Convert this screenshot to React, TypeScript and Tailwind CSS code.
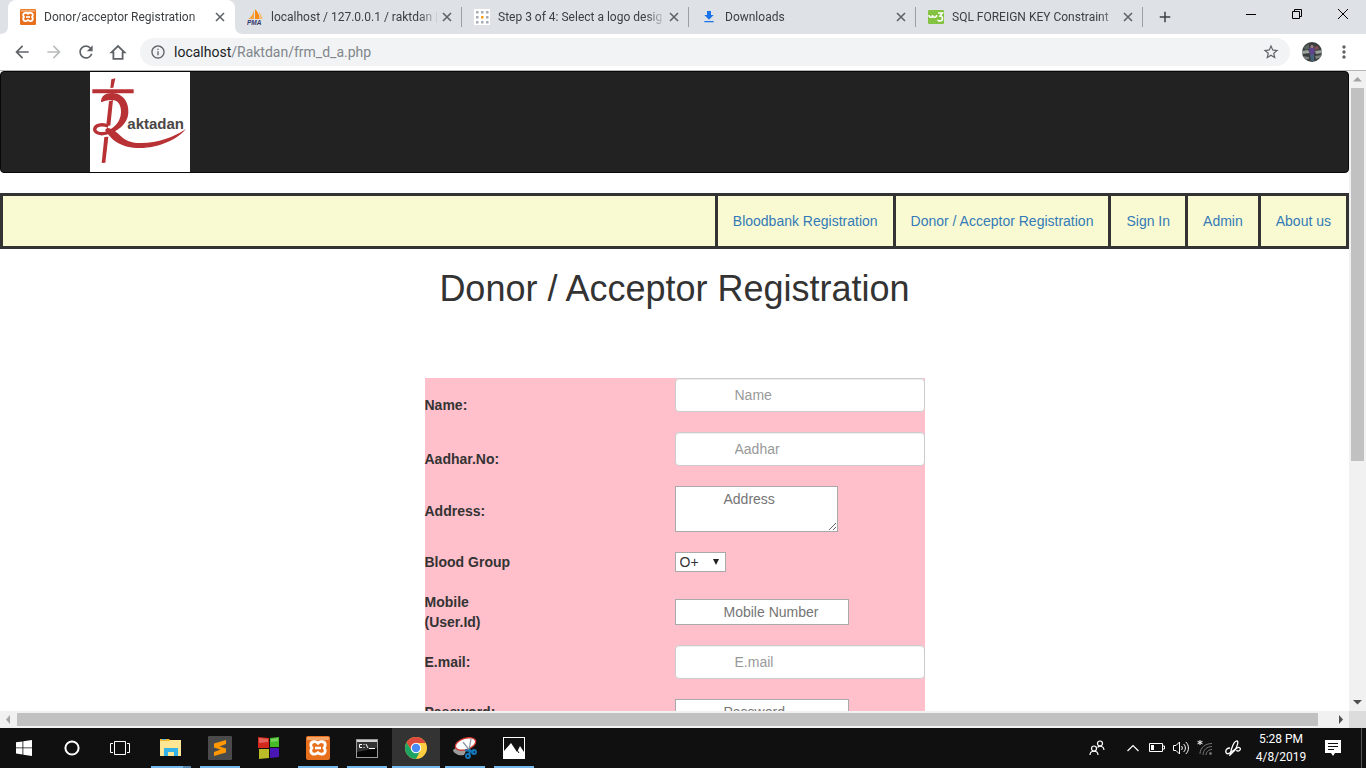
import React from "react";
import {
  MdAdd,
  MdArrowBack,
  MdArrowForward,
  MdFileDownload,
  MdInfoOutline,
  MdMoreVert,
  MdRefresh,
  MdStarBorder,
} from "react-icons/md";

function XamppIcon({ className }: { className: string }) {
  return (
    <svg viewBox="0 0 24 24" className={className} aria-hidden="true">
      <rect width="24" height="24" rx="2" fill="#e8701c" />
      <rect x="1" y="1" width="22" height="3" rx="1" fill="#f5a76a" />
      <path
        d="M12 7.3C10 4.6 4.6 5.300 4.800 9c0 1.300.500 2.300 1.300 3-1 .8-1.500 2-1.300 3.200.5 3.500 5.200 3.800 7.200 1.300 2 2.500 6.700 2.200 7.200-1.300.2-1.200-.3-2.400-1.300-3.200.8-.7 1.300-1.700 1.300-3 .2-3.700-5.200-4.400-7.200-1.700Z"
        fill="none"
        stroke="#fff"
        strokeWidth="2.800"
        strokeLinejoin="round"
      />
      <path d="M9 12h6" stroke="#fff" strokeWidth="2.500" />
    </svg>
  );
}

function PmaIcon() {
  return (
    <svg viewBox="0 0 16 16" className="size-4" aria-hidden="true">
      <path d="M7 1v9H1.500C4.500 8 6 5 7 1Z" fill="#f9a13a" />
      <path d="M8 0c3 3 4.500 6 4.500 10H8Z" fill="#f58a14" />
      <path d="M12 3c2 2 3 4 3.500 7H13Z" fill="#fbbf73" />
      <text x="0" y="15.500" fontSize="6.500" fontWeight="700" fontStyle="italic" fontFamily="Liberation Sans, sans-serif" fill="#33386b">
        PMA
      </text>
    </svg>
  );
}

function DotsIcon() {
  const points = [3, 8, 13];
  return (
    <svg viewBox="0 0 16 16" className="size-4" aria-hidden="true">
      <rect width="16" height="16" fill="#fff" />
      {points.map((y) =>
        points.map((x) => (
          <rect key={`${x}-${y}`} x={x - 1} y={y - 1} width="2.500" height="2.500" rx="0.500" fill={x === 8 && y === 8 ? "#f59b0b" : "#a2aab2"} />
        ))
      )}
    </svg>
  );
}

function W3Icon() {
  return (
    <svg viewBox="0 0 16 16" className="size-4" aria-hidden="true">
      <rect y="1" width="16" height="14" rx="1" fill="#84c341" />
      <path d="M1 6c0 3 3.500 3 3.500 0 0 3 4 3 4.200 0M10 4h4.500L12 7c3.500 0 3.500 5-.5 5-1 0-1.500-.5-2-1" fill="none" stroke="#fff" strokeWidth="1.500" />
    </svg>
  );
}

const tabs = [
  { title: "Donor/acceptor Registration", icon: <XamppIcon className="size-4" />, active: true },
  { title: "localhost / 127.0.0.1 / raktdan |", icon: <PmaIcon /> },
  { title: "Step 3 of 4: Select a logo desig", icon: <DotsIcon /> },
  { title: "Downloads", icon: <MdFileDownload className="size-4 text-[#1a73e8]" /> },
  { title: "SQL FOREIGN KEY Constraint", icon: <W3Icon /> },
];

function TitleBar() {
  return (
    <div className="flex h-[34px] shrink-0 bg-[#dee1e6] pl-2">
      <div className="flex min-w-0">
        {tabs.map((tab) => (
          <div
            key={tab.title}
            className={
              tab.active
                ? "relative flex w-[227px] items-center rounded-t-lg bg-white pl-3 pr-[7px]"
                : "relative flex w-[227px] items-center pl-3 pr-[7px]"
            }
          >
            {tab.active && (
              <>
                <svg viewBox="0 0 8 8" className="absolute -left-2 bottom-0 size-2" aria-hidden="true">
                  <path d="M8 0v8H0c5 0 8-3 8-8Z" fill="#fff" />
                </svg>
                <svg viewBox="0 0 8 8" className="absolute -right-2 bottom-0 size-2" aria-hidden="true">
                  <path d="M0 0v8h8c-5 0-8-3-8-8Z" fill="#fff" />
                </svg>
              </>
            )}
            {tab.icon}
            <span className="ml-2 w-[168px] whitespace-nowrap text-[12px] text-[#3c4043] [mask-image:linear-gradient(to_right,black_88%,transparent)]">
              {tab.title}
            </span>
            <button aria-label={`Close ${tab.title}`} className="flex size-4 shrink-0 items-center justify-center text-[#5f6368]">
              <svg viewBox="0 0 10 10" className="size-[10px]" aria-hidden="true">
                <path d="m1 1 8 8M9 1 1 9" stroke="currentColor" strokeWidth="1.600" />
              </svg>
            </button>
            {!tab.active && <span className="absolute right-0 top-[7px] h-5 w-px bg-[#9aa0a6]" />}
          </div>
        ))}
      </div>
      <button aria-label="New tab" className="flex w-11 items-center justify-center text-[#3c4043]">
        <MdAdd className="size-[18px]" />
      </button>
      <div className="ml-auto flex h-7">
        <button aria-label="Minimize" className="flex w-[46px] items-center justify-center">
          <svg viewBox="0 0 10 10" className="size-[10px]"><path d="M0 5.500h10" stroke="#000" /></svg>
        </button>
        <button aria-label="Restore" className="flex w-[46px] items-center justify-center">
          <svg viewBox="0 0 10 10" className="size-[10px]"><path d="M.5 2.500h7v7h-7ZM2.500 2.500v-2h7v7h-2" fill="none" stroke="#000" /></svg>
        </button>
        <button aria-label="Close window" className="flex w-[46px] items-center justify-center">
          <svg viewBox="0 0 10 10" className="size-[10px]"><path d="m0 0 10 10M10 0 0 10" stroke="#000" /></svg>
        </button>
      </div>
    </div>
  );
}

function Toolbar() {
  return (
    <div className="flex h-[37px] shrink-0 items-center border-b border-[#b5b5b5] bg-white px-[6px] text-[#5f6368]">
      <button aria-label="Back" className="flex w-8 justify-center"><MdArrowBack className="size-5" /></button>
      <button aria-label="Forward" className="flex w-8 justify-center text-[#babcbe]"><MdArrowForward className="size-5" /></button>
      <button aria-label="Reload" className="flex w-8 justify-center"><MdRefresh className="size-5" /></button>
      <button aria-label="Home" className="flex w-8 justify-center">
        <svg viewBox="0 0 20 20" className="size-5"><path d="M3.500 10.300 10 4l6.500 6.300H14.600V16.800H5.400v-6.500Z" fill="none" stroke="currentColor" strokeWidth="1.800" /></svg>
      </button>
      <div className="ml-[6px] flex h-7 min-w-0 flex-1 items-center rounded-full bg-[#f1f3f4] px-[10px]">
        <MdInfoOutline className="size-4" />
        <div className="ml-2 text-[14px] text-[#80868b]">
          <span className="text-[#202124]">localhost</span>/Raktdan/frm_d_a.php
        </div>
        <button aria-label="Bookmark" className="ml-auto"><MdStarBorder className="size-[18px]" /></button>
      </div>
      <button aria-label="Profile" className="mx-3">
        <svg viewBox="0 0 20 20" className="size-5">
          <defs><clipPath id="avatar"><circle cx="10" cy="10" r="10" /></clipPath></defs>
          <g clipPath="url(#avatar)">
            <rect width="20" height="20" fill="#3b3f40" />
            <path d="m0 9 6-1 2 3-8 1ZM13 9l7-1v3l-6 1Z" fill="#9ba39c" />
            <path d="m2 5 5-3v5l-4 1Z" fill="#59645a" />
            <path d="m12 5 4-1 1 3-4 1Z" fill="#804d51" />
            <path d="m0 14 7 1v2l-6 1ZM13 14l7-1v2l-6 2Z" fill="#7c827c" />
            <path d="m7 6 3-1 3 2-1 6H8Z" fill="#60438f" />
            <circle cx="10" cy="4.500" r="1.500" fill="#a38482" />
            <path d="m8 13 4-1v7H9Z" fill="#45627d" />
          </g>
        </svg>
      </button>
      <button aria-label="Menu" className="mr-[6px] flex w-5 justify-center"><MdMoreVert className="size-5" /></button>
    </div>
  );
}

function RaktadanLogo() {
  return (
    <svg viewBox="90 24 300 300" className="size-[100px]" role="img" aria-label="Raktadan">
      <rect x="90" y="24" width="300" height="300" fill="#fff" />
      <g fill="#b83135">
        <path d="M97 76h124v12H97Z" />
        <path d="m154 46 12-3-6 28-9 1Z" />
        <path d="m147 112 12-4-8 77-12-3Z" />
        <path d="m133 219 12-1-9 78-11 1Z" />
        <path d="M123 115c-1-20 16-29 35-28 31 2 49 27 47 60-2 33-31 55-66 65l-2-9c26-9 45-30 46-58 1-24-11-38-29-37-14 0-21 3-31 7Z" />
        <path d="M142 191c43 10 36 45 98 46 49 1 103-17 137-42-22 31-82 57-137 57-57 0-84-22-105-54Z" />
      </g>
      <path d="M139 207c-20 6-35-2-35-11 1-13 22-18 41-9" fill="none" stroke="#b83135" strokeWidth="10" />
      <text x="202" y="195" fontSize="45" fontWeight="700" fontFamily="Liberation Sans, sans-serif" fill="#4b4646">
        aktadan
      </text>
    </svg>
  );
}

const links = ["Bloodbank Registration", "Donor / Acceptor Registration", "Sign In", "Admin", "About us"];

const control =
  "h-[34px] w-full rounded-[4px] border border-[#ccc] bg-white pl-[59px] pr-3 shadow-[inset_0_1px_1px_rgba(0,0,0,0.075)] placeholder:text-[#999]";
const plain = "h-[26px] w-[174px] border border-[#a9a9a9] bg-white pl-12 placeholder:text-[#757575]";

function Page() {
  return (
    <main className="min-w-0 flex-1 overflow-hidden bg-white font-['Liberation_Sans',Arial,sans-serif] text-[14px] leading-5 text-[#333]">
      <header className="mb-5 rounded-[4px] border border-[#080808] bg-[#222] pl-[89px]">
        <RaktadanLogo />
      </header>
      <nav className="flex justify-end border-[3px] border-[#333] bg-[#fafad2]">
        {links.map((link) => (
          <a key={link} href="#" className="border-l-[3px] border-[#333] p-[15px] text-[#337ab7]">
            {link}
          </a>
        ))}
      </nav>
      <h1 className="mt-5 text-center text-[36px] leading-10">Donor / Acceptor Registration</h1>
      <form className="mx-auto mt-[69px] w-[500px] bg-[#ffc0cb]">
        <div className="grid h-[54px] grid-cols-2 items-center">
          <label htmlFor="name" className="font-bold">Name:</label>
          <input id="name" placeholder="Name" className={`${control} self-start`} />
        </div>
        <div className="grid h-[54px] grid-cols-2 items-center">
          <label htmlFor="aadhar" className="font-bold">Aadhar.No:</label>
          <input id="aadhar" placeholder="Aadhar" className={`${control} self-start`} />
        </div>
        <div className="mb-4 grid h-[50px] grid-cols-2 items-center">
          <label htmlFor="address" className="font-bold">Address:</label>
          <textarea
            id="address"
            placeholder="Address"
            className="h-[46px] w-[163px] resize self-start overflow-hidden border border-[#a9a9a9] bg-white py-[2px] pl-12 placeholder:text-[#757575]"
          />
        </div>
        <div className="mb-5 grid h-5 grid-cols-2 items-center">
          <label htmlFor="blood" className="font-bold">Blood Group</label>
          <div className="relative h-5 w-[51px]">
            <select id="blood" className="block h-5 w-full appearance-none border border-[#a9a9a9] bg-white pl-1 leading-[18px] text-[#333]">
              <option>O+</option>
              <option>O-</option>
              <option>A+</option>
              <option>A-</option>
              <option>B+</option>
              <option>B-</option>
              <option>AB+</option>
              <option>AB-</option>
            </select>
            <svg viewBox="0 0 6 6" className="pointer-events-none absolute right-[7px] top-[7px] size-[6px]" aria-hidden="true">
              <path d="M0 0h6L3 6Z" fill="#222" />
            </svg>
          </div>
        </div>
        <div className="mb-[13px] grid grid-cols-2 items-center">
          <label htmlFor="mobile" className="font-bold">
            Mobile
            <br />
            (User.Id)
          </label>
          <input id="mobile" placeholder="Mobile Number" className={plain} />
        </div>
        <div className="mb-5 grid grid-cols-2 items-center">
          <label htmlFor="email" className="font-bold">E.mail:</label>
          <input id="email" type="email" placeholder="E.mail" className={control} />
        </div>
        <div className="grid grid-cols-2 items-center pb-5">
          <label htmlFor="password" className="font-bold">Password:</label>
          <input id="password" type="password" placeholder="Password" className={plain} />
        </div>
      </form>
    </main>
  );
}

function Arrow({ d, dark }: { d: string; dark?: boolean }) {
  return (
    <svg viewBox="0 0 17 17" className="size-[17px] shrink-0" aria-hidden="true">
      <path d={d} fill={dark ? "#505050" : "#a3a3a3"} />
    </svg>
  );
}

function FolderIcon() {
  return (
    <svg viewBox="0 0 22 20" className="h-5 w-[22px]">
      <path d="M0 2V1h9l2 2h10v15H0Z" fill="#f5b82e" />
      <path d="M0 3h9l1-1h11v16H0Z" fill="#ffe694" />
      <path d="M2 1h4v1H2Z" fill="#59b6e7" />
      <path d="M4 18v-8h14v8h-4v-4H8v4Z" fill="#35b3e7" />
    </svg>
  );
}

function SublimeIcon() {
  return (
    <svg viewBox="0 0 24 24" className="size-6">
      <rect width="24" height="24" rx="1" fill="#4a4a4a" />
      <path d="M18 4v4l-6.500 2.500L18 12.500v4L6 20v-4l6.500-2.500L6 11.500v-4Z" fill="#ff9800" />
    </svg>
  );
}

function CubesIcon() {
  return (
    <svg viewBox="0 0 22 24" className="h-6 w-[22px]">
      <path d="m0 1 11 1v10H0Z" fill="#d4271e" />
      <path d="M12 2l9-1v10h-9Z" fill="#46b926" />
      <path d="M1 13h10v9L1 23Z" fill="#bcbc28" />
      <path d="M12 12h9v9l-9 1Z" fill="#4a16b5" />
      <path d="m1 2 9 1v3L1 7Z" fill="#ef8e86" opacity=".6" />
      <path d="m13 3 7-1v3l-7 1Z" fill="#9ae984" opacity=".6" />
    </svg>
  );
}

function TerminalIcon() {
  return (
    <svg viewBox="0 0 22 19" className="h-[19px] w-[22px]">
      <rect x=".5" y=".5" width="21" height="18" fill="#060606" stroke="#9b9b9b" />
      <path d="M1 1h20v2H1Z" fill="#d5d5d5" />
      <path d="M1 3h20v6L1 13Z" fill="#333" />
      <path d="M6 5.500H3.500v3H6M8 5v1M8 8v1M10 5l2 4M13 9.500h6" fill="none" stroke="#fff" />
    </svg>
  );
}

function ChromeIcon() {
  return (
    <svg viewBox="0 0 22 22" className="size-[22px]">
      <circle cx="11" cy="11" r="11" fill="#ffcd40" />
      <path d="M1.500 5.500A11 11 0 0 1 20.500 5.500L21 6H11L6.700 13.500Z" fill="#dd4b3e" />
      <path d="M1.500 5.500 6.700 13.500 11 16l4.300-2.500L11 22A11 11 0 0 1 1.500 5.500Z" fill="#1da362" />
      <circle cx="11" cy="11" r="5.200" fill="#fff" />
      <circle cx="11" cy="11" r="4.200" fill="#4a8af4" />
    </svg>
  );
}

function SnipIcon() {
  return (
    <svg viewBox="0 0 24 22" className="h-[22px] w-6">
      <path d="M0 13c2-3 10-4 14-1l-3 6c-5 1-10-1-11-5Z" fill="#9b9b9b" />
      <ellipse cx="12.500" cy="7" rx="10.500" ry="5.600" transform="rotate(-18 12.500 7)" fill="#fff" stroke="#cf3b34" strokeWidth="1.300" />
      <path d="m10 5 7 9M18 2l-2 11" stroke="#8c9ba5" strokeWidth="1.300" />
      <g fill="none" stroke="#1576b9" strokeWidth="1.900">
        <path d="m12 13 9 2M17 12l-1 7" />
        <circle cx="21" cy="15" r="2" />
        <circle cx="15" cy="19" r="2" />
      </g>
    </svg>
  );
}

function PhotosIcon() {
  return (
    <svg viewBox="0 0 22 22" className="size-[22px]">
      <rect x=".5" y=".5" width="21" height="21" fill="#101010" stroke="#fff" />
      <path d="M1 14 8 6l6 9 3-6 4 6v6H1Z" fill="#fff" />
      <path d="m14 13 2 3" stroke="#101010" />
    </svg>
  );
}

const apps = [
  { name: "File Explorer", icon: <FolderIcon />, open: true, stacked: true },
  { name: "Sublime Text", icon: <SublimeIcon />, open: true },
  { name: "Cubes", icon: <CubesIcon />, open: false },
  { name: "XAMPP", icon: <XamppIcon className="size-6" />, open: true },
  { name: "Command Prompt", icon: <TerminalIcon />, open: true },
  { name: "Google Chrome", icon: <ChromeIcon />, open: true, current: true },
  { name: "Snipping Tool", icon: <SnipIcon />, open: true },
  { name: "Photos", icon: <PhotosIcon />, open: true },
];

const trayButton = "flex h-full w-6 items-center justify-center";

function Taskbar() {
  return (
    <footer className="flex h-10 shrink-0 bg-[#101010] text-white">
      <button aria-label="Start" className="flex w-12 items-center justify-center">
        <svg viewBox="0 0 16 16" className="size-4">
          <path d="m0 2.300 6.500-.9v6.100H0ZM7.300 1.200 16 0v7.500H7.300ZM0 8.300h6.500v6.200L0 13.600ZM7.300 8.300H16V16l-8.700-1.300Z" fill="#fff" />
        </svg>
      </button>
      <button aria-label="Cortana" className="flex w-12 items-center justify-center">
        <svg viewBox="0 0 16 16" className="size-4"><circle cx="8" cy="8" r="6.600" fill="none" stroke="#fff" strokeWidth="2" /></svg>
      </button>
      <button aria-label="Task view" className="mr-[3px] flex w-12 items-center justify-center">
        <svg viewBox="0 0 20 14" className="h-[14px] w-5">
          <path d="M4.500.5h11v13h-11ZM3 2.500H.5v9H3M17 2.500h2.500v9H17" fill="none" stroke="#fff" />
        </svg>
      </button>
      <div className="flex gap-px">
        {apps.map((app) => (
          <button
            key={app.name}
            aria-label={app.name}
            className={app.current ? "relative flex w-12 items-center justify-center bg-[#333]" : "relative flex w-12 items-center justify-center"}
          >
            {app.icon}
            {app.open && (
              <span className={app.current ? "absolute inset-x-0 bottom-0 h-[2px] bg-[#76b9ed]" : "absolute inset-x-1 bottom-0 h-[2px] bg-[#76b9ed]"} />
            )}
            {app.stacked && <span className="absolute bottom-0 right-1 h-[2px] w-2 bg-[#5688ae]" />}
          </button>
        ))}
      </div>
      <div className="ml-auto flex items-center">
        <button aria-label="People" className="mr-3 flex h-full w-6 items-center justify-center">
          <svg viewBox="0 0 16 16" className="size-4" fill="none" stroke="#fff" strokeWidth="1.200">
            <circle cx="5" cy="8.500" r="2.500" />
            <path d="M1 15c0-5 8-5 8 0" />
            <circle cx="11" cy="3.500" r="2.500" />
            <path d="M8.500 7.500C11 5 15 6.500 15 10" />
          </svg>
        </button>
        <button aria-label="Show hidden icons" className={trayButton}>
          <svg viewBox="0 0 12 8" className="h-2 w-3"><path d="m.5 7 5.500-5.500L11.500 7" fill="none" stroke="#fff" strokeWidth="1.200" /></svg>
        </button>
        <button aria-label="Battery" className={trayButton}>
          <svg viewBox="0 0 16 10" className="h-[10px] w-4"><path d="M.5.5h13v8H.5ZM14 3h1.500v3H14" fill="none" stroke="#fff" /><path d="M2 2h3v5H2Z" fill="#fff" /></svg>
        </button>
        <button aria-label="Volume" className={trayButton}>
          <svg viewBox="0 0 16 14" className="h-[14px] w-4" fill="none" stroke="#fff">
            <path d="M.5 4.500H3L6.500 1v12L3 9.500H.5Z" />
            <path d="M8.500 5c1 1 1 3 0 4M10.500 3c2.500 2 2.500 6 0 8M12.800 1c3.500 3 3.500 9 0 12" />
          </svg>
        </button>
        <button aria-label="Network" className={trayButton}>
          <svg viewBox="0 0 16 16" className="size-4" fill="none" stroke="#777">
            <path d="M3 14C3 8 8 3.500 15 3.500M6 15c0-5 4-8.500 9-8.500M9 15c0-3 3-5.500 6-5.500" />
            <circle cx="13.500" cy="13.500" r="1" fill="#777" />
            <path d="M3 0v5M.5 1.300l5 2.500M5.500 1.300l-5 2.500" stroke="#fff" />
          </svg>
        </button>
        <button aria-label="Ink workspace" className="flex h-full w-8 items-center justify-center">
          <svg viewBox="0 0 16 16" className="size-4" fill="none" stroke="#fff" strokeWidth="1.300">
            <path d="M5 15 6.500 9C8 4 10 1 12 .8c2 .5 0 6-2 9.200Z" />
            <path d="M5 8C2 8 .5 10 .8 12c.7 2.500 3 2 4.700.5L12 8c2.500-1.500 4 .5 3 2-.8 1.500-3 1.500-3.500 0" />
          </svg>
        </button>
        <button className="w-16 text-center text-[12px] leading-[18px]">
          5:28 PM
          <br />
          4/8/2019
        </button>
        <button aria-label="Notifications" className="flex h-full w-10 items-center justify-center">
          <svg viewBox="0 0 16 16" className="size-4">
            <path d="M0 0h16v13h-6l-2 3-2-3H0Z" fill="#fff" />
            <path d="M3 3.500h10M3 6.500h10M3 9.500h6" stroke="#101010" />
          </svg>
        </button>
        <span className="ml-2 mr-1 h-10 w-px bg-[#555]" />
      </div>
    </footer>
  );
}

export default function App() {
  return (
    <div className="flex h-screen flex-col overflow-hidden font-[Roboto,'Open_Sans',sans-serif]">
      <TitleBar />
      <Toolbar />
      <div className="flex min-h-0 flex-1">
        <Page />
        <div className="flex w-[17px] shrink-0 flex-col bg-[#f1f1f1]">
          <Arrow d="M8.500 6 13 10.500H4Z" />
          <div className="mx-[2px] flex-[373] bg-[#c1c1c1]" />
          <div className="flex-[233]" />
          <Arrow d="M8.500 10.500 4 6h9Z" dark />
        </div>
      </div>
      <div className="flex h-[17px] shrink-0 bg-[#f1f1f1]">
        <Arrow d="M6 8.500 10 4v9Z" />
        <div className="my-[2px] flex-[1301] bg-[#c1c1c1]" />
        <div className="flex-[14]" />
        <Arrow d="M11 8.500 7 4v9Z" dark />
        <div className="w-[17px] bg-[#dcdcdc]" />
      </div>
      <Taskbar />
    </div>
  );
}
